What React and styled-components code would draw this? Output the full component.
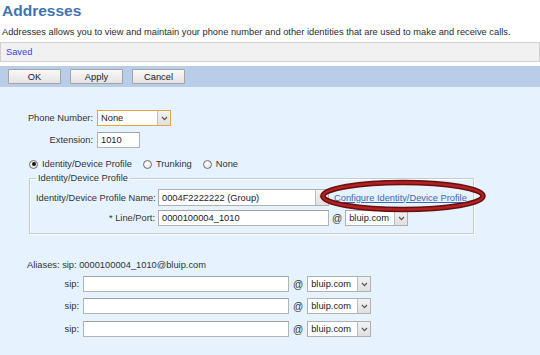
import React from "react";
import styled, { createGlobalStyle } from "styled-components";

const GlobalStyle = createGlobalStyle`
  html, body {
    margin: 0;
    padding: 0;
    background: #ffffff;
  }
  body {
    font-family: "Liberation Sans", Arial, sans-serif;
    font-size: 9.3px;
    color: #333;
  }
`;

const Page = styled.div`
  position: relative;
  width: 540px;
  height: 355px;
  overflow: hidden;
  display: flex;
  flex-direction: column;
`;

const Title = styled.h1`
  margin: 0;
  padding: 1px 0 0 2px;
  height: 20px;
  font-size: 15.5px;
  line-height: 20px;
  font-weight: bold;
  color: #3f74ae;
`;

const Description = styled.p`
  margin: 5px 0 0 2px;
  line-height: 12px;
  color: #2b2b2b;
`;

const StatusBar = styled.div`
  margin-top: 4px;
  height: 18px;
  line-height: 18px;
  padding-left: 5px;
  background: #f1f1f1;
  border: 1px solid #cfcfcf;
  color: #4040ee;
`;

const ButtonBar = styled.div`
  margin-top: 4px;
  height: 21px;
  box-sizing: border-box;
  padding: 3px 8px 0;
  display: flex;
  gap: 9px;
  background: #b9cde9;
`;

const Button = styled.button`
  width: 53px;
  height: 15px;
  padding: 0;
  font-family: inherit;
  font-size: 9.3px;
  color: #222;
  background: linear-gradient(#f8f8f8, #e4e4e4);
  border: 1px solid #a3a3a3;
  border-radius: 1px;
`;

const Content = styled.div`
  flex: 1;
  background: #e6f2fd;
  padding-top: 23px;
  display: flex;
  flex-direction: column;
  align-items: flex-start;
`;

const Row = styled.div`
  display: flex;
  align-items: center;
  margin-top: ${(p) => p.$mt || 0}px;
  padding-left: ${(p) => p.$pl || 0}px;
  height: ${(p) => p.$h || 16}px;
`;

const Label = styled.span`
  flex: none;
  width: ${(p) => p.$w}px;
  text-align: right;
  margin-right: ${(p) => p.$mr ?? 4}px;
  white-space: nowrap;
`;

const TextInput = styled.div`
  flex: none;
  box-sizing: border-box;
  width: ${(p) => p.$w}px;
  height: ${(p) => p.$h || 16}px;
  line-height: ${(p) => (p.$h || 16) - 2}px;
  padding-left: 3px;
  background: #fff;
  border: 1px solid #b4b4b4;
  border-top-color: #a2a2a2;
  color: #222;
  white-space: nowrap;
`;

const SelectBox = styled.div`
  flex: none;
  box-sizing: border-box;
  width: ${(p) => p.$w}px;
  height: ${(p) => p.$h || 16}px;
  display: flex;
  background: #fff;
  border: 1px solid ${(p) => (p.$focus ? "#e2a644" : "#b0b0b0")};
  color: #222;
`;

const SelectText = styled.span`
  flex: 1;
  padding-left: 3px;
  display: flex;
  align-items: center;
  white-space: nowrap;
`;

const ArrowBox = styled.span`
  width: 12px;
  display: flex;
  align-items: center;
  justify-content: center;
  background: linear-gradient(#f2f2f2, #e0e0e0);
  border-left: 1px solid #bdbdbd;
`;

const At = styled.span`
  margin: 0 ${(p) => p.$r || 3}px 0 ${(p) => p.$l || 3}px;
  font-size: 10px;
`;

const RadioGroup = styled.label`
  display: flex;
  align-items: center;
  margin-right: 11px;
`;

const RadioCircle = styled.span`
  box-sizing: border-box;
  width: 9px;
  height: 9px;
  margin-right: 4px;
  border-radius: 50%;
  border: 1px solid #6f6f6f;
  background: radial-gradient(circle at 40% 35%, #ffffff, #dcdcdc);
  display: flex;
  align-items: center;
  justify-content: center;
  &::after {
    content: "";
    display: ${(p) => (p.$checked ? "block" : "none")};
    width: 4px;
    height: 4px;
    border-radius: 50%;
    background: #111;
  }
`;

const Fieldset = styled.fieldset`
  box-sizing: border-box;
  width: 444px;
  margin: 3px 0 0 29px;
  padding: 0 6px 7px;
  border: 1px solid #c3ccd6;
  box-shadow: inset 1px 1px 0 #fff, 1px 1px 0 #fff;
`;

const Legend = styled.legend`
  padding: 0 2px;
  line-height: 11px;
`;

const Link = styled.a`
  margin-left: 5px;
  color: #3d68b5;
  text-decoration: underline;
  white-space: nowrap;
`;

const Aliases = styled.div`
  margin-top: 26px;
  padding-left: 27px;
  line-height: 11px;
`;

const Highlight = styled.svg`
  position: absolute;
  left: 318px;
  top: 178px;
  pointer-events: none;
`;

const Chevron = () => (
  <svg width="7" height="5" viewBox="0 0 7 5">
    <polyline points="1,1 3.5,3.6 6,1" fill="none" stroke="#555" strokeWidth="1.2" />
  </svg>
);

const Select = ({ value, w, h, focus }) => (
  <SelectBox $w={w} $h={h} $focus={focus}>
    <SelectText>{value}</SelectText>
    <ArrowBox>
      <Chevron />
    </ArrowBox>
  </SelectBox>
);

const Radio = ({ checked, children }) => (
  <RadioGroup>
    <RadioCircle $checked={checked} />
    {children}
  </RadioGroup>
);

const SipRow = ({ mt }) => (
  <Row $mt={mt}>
    <Label $w={79}>sip:</Label>
    <TextInput $w={206} />
    <At $l={4} $r={4}>@</At>
    <Select value="bluip.com" w={64} />
  </Row>
);

export default function App() {
  return (
    <>
      <GlobalStyle />
      <Page>
        <Title>Addresses</Title>
        <Description>
          Addresses allows you to view and maintain your phone number and other
          identities that are used to make and receive calls.
        </Description>
        <StatusBar>Saved</StatusBar>
        <ButtonBar>
          <Button>OK</Button>
          <Button>Apply</Button>
          <Button>Cancel</Button>
        </ButtonBar>
        <Content>
          <Row>
            <Label $w={93}>Phone Number:</Label>
            <Select value="None" w={74} focus />
          </Row>
          <Row $mt={6}>
            <Label $w={93}>Extension:</Label>
            <TextInput $w={43}>1010</TextInput>
          </Row>
          <Row $mt={10} $h={12} $pl={29}>
            <Radio checked>Identity/Device Profile</Radio>
            <Radio>Trunking</Radio>
            <Radio>None</Radio>
          </Row>
          <Fieldset>
            <Legend>Identity/Device Profile</Legend>
            <Row $mt={5} $h={17}>
              <Label $w={119} $mr={3}>Identity/Device Profile Name:</Label>
              <Select value="0004F2222222 (Group)" w={171} h={17} />
              <Link href="#">Configure Identity/Device Profile</Link>
            </Row>
            <Row $mt={4}>
              <Label $w={119} $mr={3}>* Line/Port:</Label>
              <TextInput $w={171}>0000100004_1010</TextInput>
              <At>@</At>
              <Select value="bluip.com" w={63} />
            </Row>
          </Fieldset>
          <Aliases>Aliases: sip: 0000100004_1010@bluip.com</Aliases>
          <SipRow mt={5} />
          <SipRow mt={6} />
          <SipRow mt={7} />
        </Content>
        <Highlight width="170" height="36" viewBox="0 0 170 36">
          <ellipse cx="85" cy="18" rx="80" ry="13.5" fill="none" stroke="#6a0e0e" strokeWidth="5.5" />
          <ellipse cx="85" cy="18" rx="80" ry="13.5" fill="none" stroke="#b02222" strokeWidth="2.5" />
        </Highlight>
      </Page>
    </>
  );
}
